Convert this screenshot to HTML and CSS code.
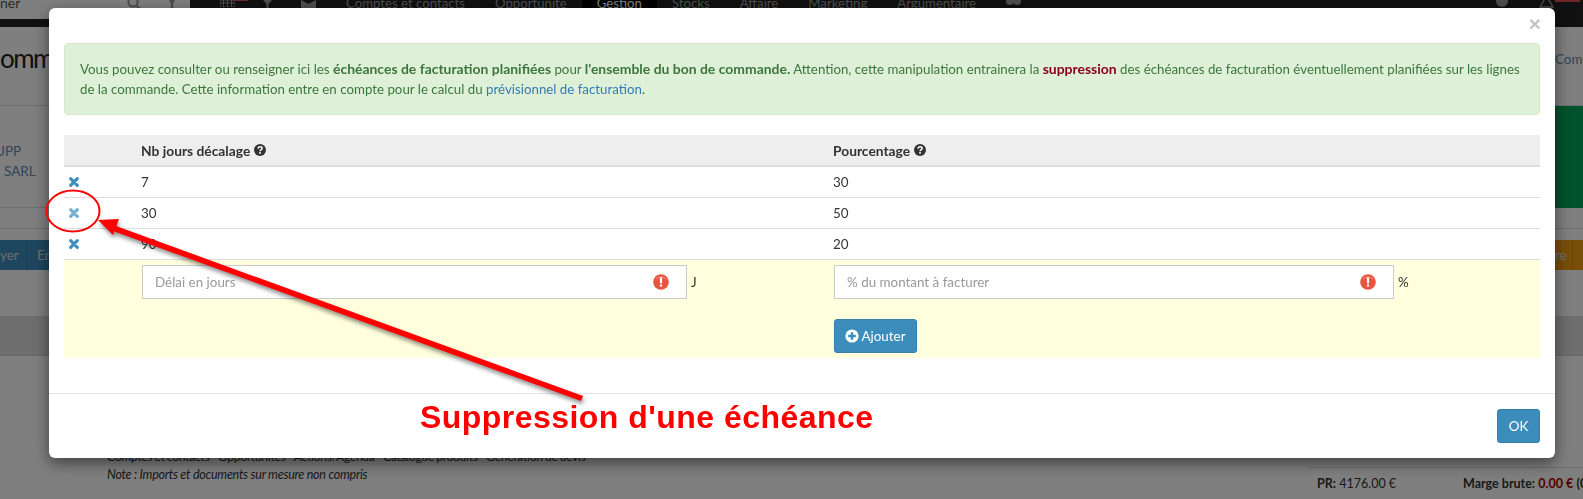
FILE: index.html
```html
<!DOCTYPE html>
<html lang="fr">
<head>
<meta charset="utf-8">
<title>Échéances de facturation</title>
<link rel="stylesheet" href="styles.css">
</head>
<body>
<svg class="defs" width="0" height="0" aria-hidden="true">
  <symbol id="i-x" viewBox="0 0 10 10"><path d="M1.7 1.7 8.3 8.3M8.3 1.7 1.7 8.3" fill="none" stroke="currentColor" stroke-width="3.1" stroke-linecap="round"/></symbol>
  <symbol id="i-help" viewBox="0 0 12 12"><circle cx="6" cy="6" r="6" fill="#333"/><path d="M4 4.6C4.1 3.4 4.9 2.8 6.1 2.8 7.3 2.8 8.1 3.5 8.1 4.4 8.1 5.7 6.1 5.7 6.1 7.2" fill="none" stroke="#fff" stroke-width="1.5"/><rect x="5.2" y="8.1" width="1.7" height="1.6" fill="#fff"/></symbol>
  <symbol id="i-err" viewBox="0 0 16 16"><circle cx="8" cy="8" r="7.8" fill="#e8553f"/><path d="M2 6A6.5 6 0 0 1 14 6 9 9 0 0 0 2 6Z" fill="#f2816e"/><rect x="6.9" y="3.2" width="2.2" height="6.2" rx=".6" fill="#fff"/><rect x="6.9" y="10.4" width="2.2" height="2.2" rx=".5" fill="#fff"/></symbol>
</svg>

<div class="page">
  <header class="topbar">
    <div class="brand">
      <span class="search-text">ner</span>
      <svg class="ico-search" width="14" height="14" viewBox="0 0 14 14"><circle cx="6" cy="2" r="4.6" fill="none" stroke="#999" stroke-width="2"/><path d="M9.5 5.5 13 9" stroke="#999" stroke-width="2.4"/></svg>
      <svg class="ico-arrow" width="8" height="8" viewBox="0 0 8 8"><path d="M1 0H7L5.2 4V8H2.8V4Z" fill="#999"/></svg>
    </div>
    <nav class="topnav">
      <span class="nav-badge"></span>
      <svg class="ico-grid" width="15" height="7" viewBox="0 0 15 7"><path d="M0 0H15V7H0ZM3.5 0V7M7.5 0V7M11.5 0V7M0 3H15" fill="none" stroke="#9d9d9d"/></svg>
      <svg class="ico-filter" width="9" height="8" viewBox="0 0 9 8"><path d="M0 0H9L5.6 4V8H3.4V4Z" fill="#9d9d9d"/></svg>
      <svg class="ico-mail" width="15" height="8" viewBox="0 0 15 8"><path d="M0 0 7.5 4 15 0V8H0Z" fill="#9d9d9d"/></svg>
      <span class="nav-item nav-first">Comptes et contacts</span>
      <span class="nav-item">Opportunité</span>
      <span class="nav-item nav-active">Gestion</span>
      <span class="nav-item">Stocks</span>
      <span class="nav-item">Affaire</span>
      <span class="nav-item">Marketing</span>
      <span class="nav-item">Argumentaire</span>
      <svg class="ico-gears" width="15" height="7" viewBox="0 0 15 7"><circle cx="4" cy="1" r="4" fill="#9d9d9d"/><circle cx="11" cy="1" r="4" fill="#9d9d9d"/></svg>
      <span class="nav-spacer"></span>
      <svg class="ico-help" width="12" height="7" viewBox="0 0 12 7"><circle cx="6" cy="1" r="6" fill="#9d9d9d"/></svg>
      <svg class="ico-bell" width="15" height="8" viewBox="0 0 15 8"><path d="M7.5 -4 14 7H1Z" fill="none" stroke="#9d9d9d" stroke-width="1.3"/></svg>
      <span class="nav-badge2"></span>
    </nav>
  </header>

  <div class="title-row">
    <span class="title">omma</span>
    <span class="crumb">Comm</span>
  </div>

  <div class="info-row">
    <div class="client"><span class="upp">UPP</span><span class="sarl">SARL</span></div>
    <div class="green"></div>
  </div>

  <div class="thin-row"></div>

  <div class="toolbar">
    <div class="tools-blue"><span class="tool tool-first">yer</span><span class="tool">En</span></div>
    <div class="tools-orange"><span class="tool tool-re">re</span></div>
  </div>

  <div class="band"></div>

  <div class="bottom">
    <div class="modules">
      <div class="modules-list">Comptes et contacts - Opportunités - Actions/Agenda - Catalogue produits - Génération de devis</div>
      <div class="note">Note : Imports et documents sur mesure non compris</div>
    </div>
    <div class="totals">
      <span class="pr"><b>PR:</b> 4176.00 €</span>
      <span><b>Marge brute:</b> <b class="neg">0.00 €</b> <b>(0 %</b></span>
    </div>
  </div>
</div>

<div class="backdrop"></div>

<section class="modal">
  <div class="close">×</div>
  <div class="modal-body">
    <div class="alert">Vous pouvez consulter ou renseigner ici les <b>échéances de facturation planifiées</b> pour <b>l'ensemble du bon de commande.</b> Attention, cette manipulation entrainera la <b class="danger">suppression</b> des échéances de facturation éventuellement planifiées sur les lignes de la commande. Cette information entre en compte pour le calcul du <a class="link">prévisionnel de facturation</a>.</div>

    <div class="grid head">
      <span></span>
      <span class="th">Nb jours décalage <svg class="help" width="12" height="12"><use href="#i-help"/></svg></span>
      <span class="th">Pourcentage <svg class="help" width="12" height="12"><use href="#i-help"/></svg></span>
    </div>
    <div class="grid row"><svg class="x" width="10" height="10"><use href="#i-x"/></svg><span>7</span><span>30</span></div>
    <div class="grid row"><svg class="x x-hover" width="10" height="10"><use href="#i-x"/></svg><span>30</span><span>50</span></div>
    <div class="grid row"><svg class="x" width="10" height="10"><use href="#i-x"/></svg><span>90</span><span>20</span></div>

    <div class="grid new">
      <span></span>
      <div class="field">
        <div class="input input-days"><span class="ph">Délai en jours</span><svg width="16" height="16"><use href="#i-err"/></svg></div>
        <span class="unit">J</span>
      </div>
      <div class="col-pct">
        <div class="field">
          <div class="input input-pct"><span class="ph">% du montant à facturer</span><svg width="16" height="16"><use href="#i-err"/></svg></div>
          <span class="unit">%</span>
        </div>
        <button class="btn btn-add" type="button"><svg width="14" height="14" viewBox="0 0 14 14"><circle cx="7" cy="7" r="6.6" fill="#fff"/><path d="M7 3.2V10.8M3.2 7H10.8" stroke="#3c8dbc" stroke-width="2.4"/></svg>Ajouter</button>
      </div>
    </div>
  </div>
  <div class="modal-footer"><button class="btn btn-ok" type="button">OK</button></div>
</section>

<svg class="annot" width="1583" height="499" viewBox="0 0 1583 499" aria-hidden="true">
  <g class="annot-shadow">
    <path d="M116 226 583 396 581 401 113 231Z" fill="#f00"/>
    <path d="M98 220 119 219 113 235Z" fill="#f00"/>
  </g>
  <ellipse cx="73" cy="211" rx="26.5" ry="20.5" fill="none" stroke="#f00" stroke-width="2"/>
</svg>
<div class="annot-label">Suppression d'une échéance</div>
</body>
</html>
```
FILE: styles.css
```css
* { box-sizing: border-box; }
html, body { margin: 0; height: 499px; overflow: hidden; background: #fff; }
body { font-family: "Lato", "Liberation Sans", sans-serif; font-size: 13.4px; color: #333; }
.defs { position: absolute; }
svg { display: block; flex: none; }

/* page behind the modal */
.page { display: flex; flex-direction: column; height: 499px; }
.topbar { display: flex; height: 27px; flex: none; overflow: hidden; }
.brand { display: flex; width: 190px; height: 27px; border-bottom: 8px solid #222; background: #fff; color: #555; line-height: 6px; font-size: 14px; }
.ico-search { margin-left: 107px; }
.ico-arrow { margin-left: 27px; }
.topnav { flex: 1; display: flex; position: relative; background: #222; color: #9d9d9d; font-size: 13.2px; line-height: 6px; }
.ico-grid { margin-left: 30px; }
.ico-filter { margin-left: 28px; }
.ico-mail { margin-left: 29px; }
.nav-badge { position: absolute; left: 43px; top: 0; width: 15px; height: 1px; background: #d9534f; }
.nav-badge2 { position: absolute; right: 3px; top: 0; width: 25px; height: 2px; background: #d9534f; }
.nav-item { padding: 0 15px; white-space: nowrap; }
.nav-first { margin-left: 15px; }
.nav-active { background: #000; color: #fff; }
.ico-gears { margin-left: 15px; }
.nav-spacer { flex: 1; }
.ico-bell { margin-left: 31px; margin-right: 29px; }

.title-row { display: flex; justify-content: space-between; height: 79px; border-bottom: 1px solid #ddd; flex: none; }
.title { font-size: 26px; letter-spacing: -1.6px; line-height: 30px; margin-top: 16px; color: #222; }
.crumb { color: #5c8cb0; font-size: 13.4px; line-height: 18px; margin-top: 23px; width: 28px; overflow: hidden; }
.info-row { display: flex; justify-content: space-between; height: 102px; border-bottom: 1px solid #ddd; flex: none; }
.client { display: flex; flex-direction: column; color: #5c8cb0; font-size: 13.5px; line-height: 20px; padding-top: 35px; }
.upp { margin-left: -5px; }
.sarl { padding-left: 4px; }
.green { width: 40px; background: #00a65a; height: 102px; }
.thin-row { height: 21px; border-bottom: 1px solid #ddd; flex: none; }
.toolbar { display: flex; justify-content: space-between; margin-top: 11px; height: 30px; flex: none; }
.tools-blue { display: flex; width: 60px; background: #3c8dbc; color: #ddd; line-height: 30px; overflow: hidden; font-size: 13.4px; }
.tool-first { width: 27px; border-right: 1px solid #2f7aa6; }
.tool { white-space: nowrap; }
.tools-blue .tool:last-child { padding-left: 10px; }
.tools-orange { display: flex; width: 40px; background: #f39c12; color: #ddd; line-height: 30px; }
.tool-re { padding-left: 12px; width: 30px; border-right: 1px solid #dd8c0c; }
.band { height: 40px; margin-top: 46px; background: #ddd; border-bottom: 1px solid #ccc; flex: none; }
.bottom { display: flex; justify-content: space-between; padding: 92px 0 0 107px; }
.modules { font-size: 12.5px; letter-spacing: -.25px; line-height: 18px; }
.modules-list { font-size: 12px; word-spacing: -.6px; }
.note { font-style: italic; }
.totals { display: flex; width: 275px; height: 30px; margin-top: 19px; padding: 8px 0 0 9px; border-top: 1px solid #ddd; font-size: 12.5px; white-space: nowrap; overflow: hidden; }
.pr { flex: none; width: 146px; }
.neg { color: #a00; }

.backdrop { position: fixed; inset: 0; background: rgba(0, 0, 0, .5); }

/* modal */
.modal { position: absolute; left: 49px; top: 8px; width: 1506px; height: 450px; background: #fff; border-radius: 6px; box-shadow: 0 5px 15px rgba(0, 0, 0, .5); }
.close { position: absolute; right: 14px; top: 5px; color: #c4c4c4; font-size: 21px; font-weight: 700; line-height: 21px; font-family: "Liberation Sans", sans-serif; }
.modal-body { padding: 35px 15px; height: 385px; }
.alert { background: #dff0d8; border: 1px solid #d6e9c6; color: #3c763d; padding: 15px; height: 72px; line-height: 20px; border-radius: 4px; font-size: 13.3px; margin-bottom: 20px; }
.alert b { font-size: 13.95px; }
.alert .danger { color: #8b0020; }
.link { color: #337ab7; }

.grid { display: grid; grid-template-columns: 78px 692px 1fr; }
.head { height: 32px; background: #eee; border-bottom: 2px solid #ddd; align-items: center; }
.th { display: flex; align-items: center; gap: 4px; margin-left: -1px; font-weight: 700; font-size: 13.8px; }
.row { height: 31px; border-bottom: 1px solid #ddd; align-items: center; }
.row span { margin-left: -1px; }
.x { color: #3c8dbc; margin-left: 5px; }
.x-hover { color: #72afd2; }
.new { height: 98px; background: #ffd; padding-top: 5px; }
.field { display: flex; gap: 4px; align-items: center; height: 34px; }
.input { display: flex; align-items: center; justify-content: space-between; height: 34px; padding: 0 17px 0 12px; background: #fff; border: 1px solid #ccc; }
.input-days { width: 545px; }
.input-pct { width: 560px; }
.ph { color: #999; }
.col-pct { display: flex; flex-direction: column; align-items: flex-start; gap: 20px; }
.btn { display: flex; align-items: center; justify-content: center; height: 34px; padding: 0; background: #3c8dbc; color: #fff; border: 1px solid #367fa9; border-radius: 3px; font: inherit; }
.btn-add { width: 83px; gap: 2px; }
.btn-ok { width: 43px; }
.modal-footer { display: flex; justify-content: flex-end; height: 65px; padding: 15px; border-top: 1px solid #e5e5e5; }

/* annotations on top of the screenshot */
.annot { position: absolute; left: 0; top: 0; pointer-events: none; }
.annot-shadow { filter: drop-shadow(1px 3px 2px rgba(0, 0, 0, .45)); }
.annot-label { position: absolute; left: 420px; top: 399px; font-family: "Liberation Sans", Arial, sans-serif; font-weight: 700; font-size: 32px; letter-spacing: .46px; line-height: 37px; color: #f00; white-space: nowrap; }
```
